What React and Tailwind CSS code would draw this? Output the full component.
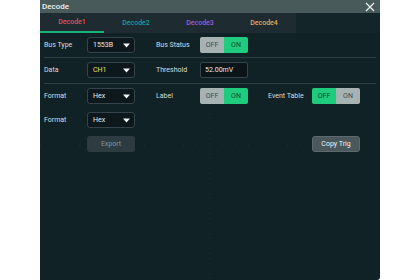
import React from "react";

const font = { fontFamily: "Roboto, 'Liberation Sans', sans-serif" };

function Caret() {
  return (
    <svg width="7" height="5" viewBox="0 0 7 5" className="shrink-0">
      <path d="M0 0.5 H7 L3.5 4.5 Z" fill="#f2f4f4" />
    </svg>
  );
}

function Dropdown({ value, color = "text-[#e6eaea]" }) {
  return (
    <div className="w-[48px] h-[16px] flex items-center justify-between pl-[5px] pr-[4px] rounded-[3px] border border-[#34454a] bg-[#0d181c]">
      <span className={`text-[7px] ${color}`}>{value}</span>
      <Caret />
    </div>
  );
}

function Toggle({ on }) {
  return (
    <div className="w-[48px] h-[16px] flex rounded-[2px] overflow-hidden text-[7px]">
      <div className={`flex-1 flex items-center justify-center ${on ? "bg-[#a7b2b3] text-[#3d4a4d]" : "bg-[#1fcb7c] text-[#0c4a2c]"}`}>OFF</div>
      <div className={`flex-1 flex items-center justify-center ${on ? "bg-[#1fcb7c] text-[#0c4a2c]" : "bg-[#a7b2b3] text-[#3d4a4d]"}`}>ON</div>
    </div>
  );
}

function Label({ children, w = "w-[43px]" }) {
  return <div className={`${w} text-[7px] text-[#d6dddd] shrink-0`}>{children}</div>;
}

export default function App() {
  return (
    <div className="w-[420px] h-[280px] flex bg-white" style={font}>
      <div className="w-[40px]" />
      <div className="w-[340px] h-[280px] flex flex-col bg-[#112227] rounded-br-[3px] relative overflow-hidden">
        <svg className="absolute left-0 top-[33px]" width="340" height="247">
          <line x1="0" y1="112" x2="340" y2="112" stroke="#1c2e33" strokeDasharray="1 12" />
          <line x1="170" y1="0" x2="170" y2="247" stroke="#1c2e33" strokeDasharray="1 4" />
        </svg>
        <div className="h-[13px] bg-[#485a5a] flex items-center justify-between pl-[2px] pr-[5px] relative">
          <span className="text-[8px] font-medium text-[#f0f3f3]">Decode</span>
          <svg width="10" height="10" viewBox="0 0 10 10">
            <path d="M1 1 L9 9 M9 1 L1 9" stroke="#eef2f2" strokeWidth="1.2" />
          </svg>
        </div>
        <div className="h-[20px] flex relative">
          <div className="w-[256px] flex bg-[#1e2c31]">
            <div className="w-[64px] flex items-center justify-center text-[7px] font-medium text-[#e4505a] border-b-[2px] border-[#19b47a]">Decode1</div>
            <div className="w-[64px] flex items-center justify-center text-[7px] font-medium text-[#13a0a0]">Decode2</div>
            <div className="w-[64px] flex items-center justify-center text-[7px] font-medium text-[#a05ad8]">Decode3</div>
            <div className="w-[64px] flex items-center justify-center text-[7px] font-medium text-[#e7a860]">Decode4</div>
          </div>
          <div className="flex-1 bg-[#14252a]" />
        </div>
        <div className="flex flex-col pl-[4px] pr-[4px] pt-[4px] relative">
          <div className="flex items-center h-[16px]">
            <Label>Bus Type</Label>
            <Dropdown value="1553B" />
            <div className="w-[21px]" />
            <Label w="w-[44px]">Bus Status</Label>
            <Toggle on />
          </div>
          <div className="h-[1px] bg-[#2d3e43] mt-[4px]" />
          <div className="flex items-center h-[16px] mt-[4px]">
            <Label>Data</Label>
            <Dropdown value="CH1" color="text-[#e4e05a]" />
            <div className="w-[21px]" />
            <Label w="w-[44px]">Threshold</Label>
            <div className="w-[48px] h-[16px] flex items-center pl-[4px] rounded-[2px] border border-[#34454a] bg-[#0b1518] text-[7px] text-[#e6eaea]">52.00mV</div>
          </div>
          <div className="h-[1px] bg-[#2d3e43] mt-[5px]" />
          <div className="flex items-center h-[16px] mt-[4px]">
            <Label>Format</Label>
            <Dropdown value="Hex" />
            <div className="w-[21px]" />
            <Label w="w-[44px]">Label</Label>
            <Toggle on />
            <div className="w-[20px]" />
            <Label w="w-[44px]">Event Table</Label>
            <Toggle on={false} />
          </div>
          <div className="flex items-center h-[16px] mt-[8px]">
            <Label>Format</Label>
            <Dropdown value="Hex" />
          </div>
          <div className="flex items-center h-[16px] mt-[8px]">
            <div className="w-[43px]" />
            <div className="w-[48px] h-[16px] flex items-center justify-center rounded-[3px] bg-[#2d3c40] text-[7px] text-[#8a9597]">Export</div>
            <div className="w-[177px]" />
            <div className="w-[48px] h-[16px] flex items-center justify-center rounded-[3px] bg-[#4a585c] border border-[#5b6a6e] text-[7px] text-[#eef2f2]">Copy Trig</div>
          </div>
        </div>
      </div>
      <div className="w-[40px]" />
    </div>
  );
}
